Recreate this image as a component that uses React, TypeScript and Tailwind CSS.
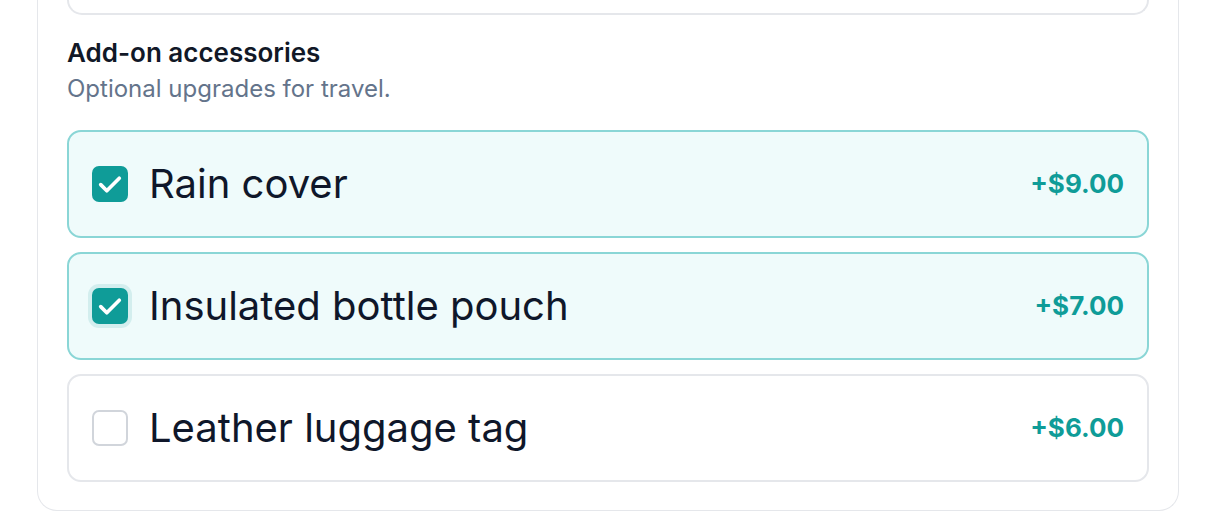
import { useState } from "react";

type Addon = {
  id: string;
  label: string;
  price: string;
};

const addons: Addon[] = [
  { id: "rain", label: "Rain cover", price: "+$9.00" },
  { id: "pouch", label: "Insulated bottle pouch", price: "+$7.00" },
  { id: "tag", label: "Leather luggage tag", price: "+$6.00" },
];

const Checkbox = (props: { checked: boolean; focused: boolean }) => {
  return (
    <span
      className={
        "flex h-9 w-9 shrink-0 items-center justify-center rounded-[7px] " +
        (props.checked
          ? "bg-[#0f9c98] " + (props.focused ? "ring-4 ring-[#d3eeee]" : "")
          : "border-2 border-[#d1d5db] bg-white")
      }
    >
      {props.checked && (
        <svg
          xmlns="http://www.w3.org/2000/svg"
          fill="none"
          viewBox="0 0 20 20"
          strokeWidth={2.3}
          stroke="white"
          className="h-8 w-8"
        >
          <path strokeLinecap="round" strokeLinejoin="round" d="M4.2 10.4l3.8 3.8 7.8-7.8" />
        </svg>
      )}
    </span>
  );
};

export default function App() {
  const [selected, setSelected] = useState<Record<string, boolean>>({
    rain: true,
    pouch: true,
    tag: false,
  });

  return (
    <div className="min-h-[520px] bg-white font-['Inter',sans-serif] text-[#0f172a]">
      <div className="mx-[37px] rounded-b-[20px] border border-t-0 border-[#e5e7eb] px-[29px] pb-[28px]">
        <div className="h-[15px] rounded-b-[16px] border-2 border-t-0 border-[#e5e7eb]" />

        <div className="mt-[22px]">
          <h3 className="text-[26px] font-semibold leading-[32px] text-[#111827]">Add-on accessories</h3>
          <p className="mt-[4px] text-[24px] leading-[32px] text-[#64748b]">Optional upgrades for travel.</p>
        </div>

        <ul className="mt-[25px] flex flex-col gap-[14px]">
          {addons.map((a) => {
            const checked = selected[a.id];
            return (
              <li key={a.id}>
                <label
                  className={
                    "flex h-[108px] cursor-pointer items-center rounded-[14px] border-2 pl-[23px] pr-[23px] " +
                    (checked ? "border-[#8ad6d6] bg-[#effbfb]" : "border-[#e5e7eb] bg-white")
                  }
                  onClick={() => setSelected({ ...selected, [a.id]: !checked })}
                >
                  <Checkbox checked={checked} focused={a.id === "pouch"} />
                  <span className="ml-[21px] flex-1 text-[40px] leading-[48px]">{a.label}</span>
                  <span className="text-[26px] font-bold leading-[32px] text-[#0f9c98]">{a.price}</span>
                </label>
              </li>
            );
          })}
        </ul>
      </div>
    </div>
  );
}
